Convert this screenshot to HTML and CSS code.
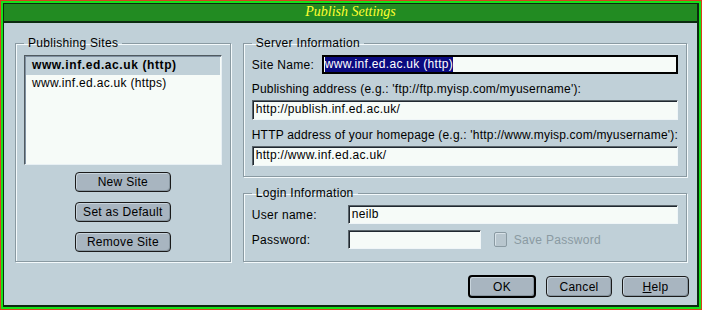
FILE: index.html
```html
<!DOCTYPE html>
<html>
<head>
<meta charset="utf-8">
<link rel="stylesheet" href="styles.css">
</head>
<body>
<div class="frame">
 <div class="frame2">
  <div class="frame3">
   <div class="titlebar">Publish Settings</div>
   <div class="content">
    <div class="main">
     <fieldset class="group sites">
      <legend>Publishing Sites</legend>
      <div class="list">
       <div class="item selected">www.inf.ed.ac.uk (http)</div>
       <div class="item">www.inf.ed.ac.uk (https)</div>
      </div>
      <div class="sidebtns">
       <button class="btn side">New Site</button>
       <button class="btn side">Set as Default</button>
       <button class="btn side">Remove Site</button>
      </div>
     </fieldset>
     <div class="rightcol">
      <fieldset class="group server">
       <legend>Server Information</legend>
       <div class="row">
        <span class="lbl sitelbl">Site Name:</span>
        <div class="input focus grow"><span class="sel">www.inf.ed.ac.uk (http)</span></div>
       </div>
       <div class="caption">Publishing address (e.g.: 'ftp://ftp.myisp.com/myusername'):</div>
       <div class="input">http://publish.inf.ed.ac.uk/</div>
       <div class="caption">HTTP address of your homepage (e.g.: 'http://www.myisp.com/myusername'):</div>
       <div class="input">http://www.inf.ed.ac.uk/</div>
      </fieldset>
      <fieldset class="group login">
       <legend>Login Information</legend>
       <div class="row">
        <span class="lbl loginlbl">User name:</span>
        <div class="input grow">neilb</div>
       </div>
       <div class="row">
        <span class="lbl loginlbl">Password:</span>
        <div class="input pw"></div>
        <span class="check"></span>
        <span class="disabled">Save Password</span>
       </div>
      </fieldset>
     </div>
    </div>
    <div class="footer">
     <button class="btn ok">OK</button>
     <button class="btn cancel">Cancel</button>
     <button class="btn help"><u>H</u>elp</button>
    </div>
   </div>
  </div>
 </div>
</div>
</body>
</html>
```
FILE: styles.css
```css
* { box-sizing: border-box; }
html, body { margin: 0; padding: 0; background: #c0d0d8; }
body { font-family: "Liberation Sans", Arial, sans-serif; font-size: 12px; letter-spacing: 0.3px; color: #000; }

.frame { width: 702px; height: 310px; border: 1px solid #d8401c; }
.frame2 { height: 100%; border: 2px solid #18e018; }
.frame3 { height: 100%; border-style: solid; border-color: #0c2a10; border-width: 1px 2px 2px 1px; display: flex; flex-direction: column; }

.titlebar { height: 19px; background: #228b22; border-bottom: 2px solid #0c2a10; color: #ffff30; font-family: "Liberation Serif", serif; font-style: italic; font-size: 14px; letter-spacing: 0; text-align: center; line-height: 16px; }

.content { flex: 1; background: #c0d0d8; display: flex; flex-direction: column; }
.main { display: flex; gap: 12px; padding: 12px 10px 0 11px; }

.group { margin: 0; border: 1px solid #8a9aa2; box-shadow: inset 1px 1px 0 #f4fafc, 1px 1px 0 #f4fafc; padding: 0 8px 8px 8px; min-width: 0; }
.group legend { margin-left: 0; padding: 0 4px; line-height: 16px; }

.sites { width: 216px; height: 227px; display: flex; flex-direction: column; }
.list { height: 110px; margin-top: 4px; background: #f6fbf8; border: 1px solid #505a60; border-right-color: #e8f0f4; border-bottom-color: #e8f0f4; box-shadow: inset 1px 1px 0 #8090a0; padding: 1px; }
.item { height: 18px; line-height: 17px; padding-left: 6px; }
.item.selected { background: #c0d0d8; font-weight: bold; letter-spacing: 0.6px; }
.sidebtns { display: flex; flex-direction: column; align-items: center; gap: 10px; margin-top: 7px; }

.btn { font-family: "Liberation Sans", Arial, sans-serif; font-size: 12px; letter-spacing: 0.3px; background: #a8b5c0; border: 1px solid #1a1a1a; border-radius: 4px; box-shadow: inset 1px 1px 0 #c8d4dc, inset -1px -1px 0 #8896a0; padding: 0; color: #000; }
.btn.side { width: 96px; height: 20px; }

.rightcol { flex: 1; display: flex; flex-direction: column; gap: 0; }
.server { height: 142px; }
.login { height: 77px; margin-top: 8px; }

.row { display: flex; align-items: center; margin-top: 4px; }
.lbl { flex: none; }
.sitelbl { width: 70px; }
.loginlbl { width: 96px; }
.grow { flex: 1; }

.input { height: 20px; background: #f6fbf8; border: 1px solid #5a646a; border-right-color: #f0f6f8; border-bottom-color: #f0f6f8; box-shadow: inset 1px 1px 0 #202830; line-height: 17px; padding: 0 3px; white-space: nowrap; overflow: hidden; }
.input.focus { border: 2px solid #000; box-shadow: none; height: 19px; padding: 0 1px; line-height: 15px; }
.sel { background: #0a0a80; color: #fff; display: inline-block; height: 15px; }

.caption { margin-top: 6px; height: 20px; line-height: 18px; white-space: nowrap; letter-spacing: 0.2px; }
.caption + .input { margin-top: 0; }

.login .row + .row { margin-top: 6px; }
.login .row .input { height: 19px; }
.pw { width: 133px; }
.check { width: 13px; height: 15px; margin-left: 13px; background: #b8c6ce; border: 1px solid #8a9aa2; border-radius: 2px; box-shadow: inset 1px 1px 0 #d8e2e8; }
.disabled { margin-left: 7px; color: #8a9aa2; }

.footer { display: flex; justify-content: flex-end; align-items: center; gap: 10px; padding: 13px 8px 0 0; }
.ok { width: 68px; height: 23px; border: 2px solid #000; }
.cancel { width: 66px; height: 21px; }
.help { width: 67px; height: 21px; }
```
